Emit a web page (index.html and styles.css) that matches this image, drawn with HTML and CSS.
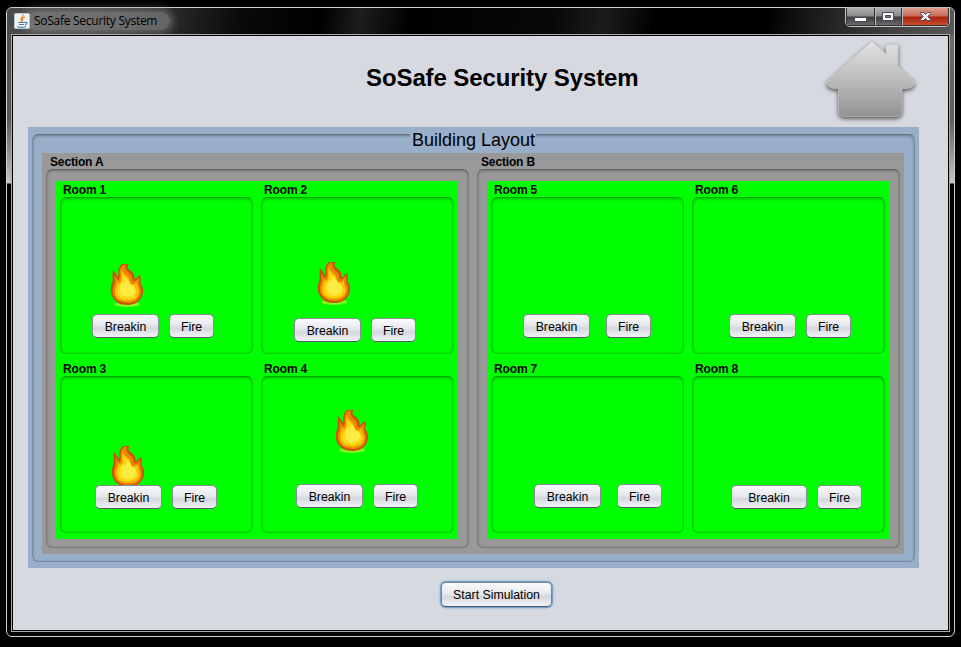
FILE: index.html
```html
<!DOCTYPE html>
<html lang="en">
<head>
<meta charset="utf-8">
<title>SoSafe Security System</title>
<link rel="stylesheet" href="styles.css">
</head>
<body>
<svg class="defs" width="0" height="0">
  <defs>
    <linearGradient id="house" x1="0" y1="0" x2="0" y2="1"><stop offset="0" stop-color="#e2e2e2"/><stop offset=".5" stop-color="#bdbdbd"/><stop offset="1" stop-color="#929292"/></linearGradient>
    <symbol id="flame" viewBox="0 0 36 44">
      <ellipse cx="18" cy="41" rx="13" ry="3" fill="#7dff20"/>
      <path fill="#c85400" d="M13 1H20C17 4 19 6 22 8C25 10 26 13 25.500 16C28 16 29 12 31.500 12.500C32 17 31 19 32 21C35 26 34.500 31 32 35C29 40 24 42 18 42C11 42 6 39 3.500 34C1 29 1.500 24 3.500 19C4 15 3 11 4 7C6 10 8 11 8.500 14C10 13 9 10 9.500 7C10 4 11 3 13 1Z"/>
      <path fill="#ee8500" d="M14 2H17C15 6 19 9 21 11C24 13 23 17 24 18.500C27 18 28 16 30 15C30 19 30 21 31 24C33 28 32 32 30 35C27 39 23 40 18 40C12 40 7 37 5 33C3 28 4 24 5.500 20C6 16 5 13 6 12C7 15 8 16 9 17C12 15 10 11 11 8C11 5 12 4 14 2Z"/>
      <path fill="#ffc000" d="M13 5C13 10 17 12 19 14C21 16 20 19 22 21C25 22 27 20 28 19C27 22 30 25 30 29C30 34 26 38 18 38C11 38 6 35 6 29C6 24 8 22 8 18L10 20C13 18 12 14 12 11Z"/>
      <path fill="#ffdb20" d="M14 11C15 15 19 15 20 18L22 22C25 24 28 26 27.500 30C27 34 23 36 18 36C12 36 8 33 8.500 28C8.500 25 10 23 11 21C14 19 14 15 14 11Z"/>
      <path fill="#faec40" d="M18 14.500C18 18 21 19 22 22C26 22 26 26 26 28C25 32 22 33.500 18 33.500C14 33.500 10.500 31 11 27C11 24 12 21 13 19C14 20 14 21 15 21C16 20 17 18 18 14.500Z"/>
    </symbol>
  </defs>
</svg>
<div class="window">
  <header class="titlebar">
    <svg class="java" viewBox="0 0 16 16"><rect x=".5" y=".5" width="15" height="15" rx="1" fill="#eef2f5" stroke="#b7c9d5"/><path d="M9 1.500C10 4 6 5 7 7L8 9M11 4C8 5 8 6 9 8" fill="none" stroke="#ee8420" stroke-width="1.200"/><path d="M4 9.500H11M5 11.500H10M3 13.500C6 14.500 10 14.500 12 13.500M11 9.500C14 9 13 11 11 12" fill="none" stroke="#4f7fa0" stroke-width="1.100"/></svg>
    <span class="caption">SoSafe Security System</span>
    <div class="controls">
      <span class="ctl min"><svg viewBox="0 0 28 18"><rect x="8.500" y="9.500" width="12" height="4" fill="#fff" stroke="#454b58"/></svg></span>
      <span class="ctl max"><svg viewBox="0 0 26 18"><path d="M7.500 4.500h11v8h-11z" fill="#fff" stroke="#454b58"/><path d="M10.500 7.500h5v2h-5z" fill="#777b84" stroke="#454b58"/></svg></span>
      <span class="ctl close"><svg viewBox="0 0 46 18"><path d="M18.500 4.500h3l2 2 2-2h3v1l-2.700 3 2.700 3v1h-3l-2-2-2 2h-3v-1l2.700-3-2.700-3z" fill="#fff" stroke="#504a55"/></svg></span>
    </div>
  </header>
  <main class="client">
    <div class="banner">
      <h1>SoSafe Security System</h1>
      <svg class="house" viewBox="0 0 94 82"><path fill="url(#house)" stroke="#c9c9c9" stroke-width=".6" d="M45.500 1.500Q47 0 48.500 1.500L61 13V3.500H73V25L89 40C91 43 87 47.500 82 47.500H77V70Q76 75 71 75.500H19Q14 75 13.500 70V47.500H9C4 47 0 43 2 40Z"/></svg>
    </div>
    <section class="building">
      <div class="frame building-frame">
        <h2>Building Layout</h2>
      <div class="sections">
        <section class="section">
          <h3>Section A</h3>
          <div class="frame section-frame"><div class="rooms">
            <article class="room r1"><h4>Room 1</h4><div class="frame room-frame"><svg class="flame"><use href="#flame"/></svg><div class="actions"><button>Breakin</button><button class="fire">Fire</button></div></div></article>
            <article class="room r2"><h4>Room 2</h4><div class="frame room-frame"><svg class="flame"><use href="#flame"/></svg><div class="actions"><button>Breakin</button><button class="fire">Fire</button></div></div></article>
            <article class="room r3"><h4>Room 3</h4><div class="frame room-frame"><svg class="flame"><use href="#flame"/></svg><div class="actions"><button>Breakin</button><button class="fire">Fire</button></div></div></article>
            <article class="room r4"><h4>Room 4</h4><div class="frame room-frame"><svg class="flame"><use href="#flame"/></svg><div class="actions"><button>Breakin</button><button class="fire">Fire</button></div></div></article>
          </div></div>
        </section>
        <section class="section">
          <h3>Section B</h3>
          <div class="frame section-frame"><div class="rooms">
            <article class="room r5"><h4>Room 5</h4><div class="frame room-frame"><div class="actions"><button>Breakin</button><button class="fire">Fire</button></div></div></article>
            <article class="room r6"><h4>Room 6</h4><div class="frame room-frame"><div class="actions"><button>Breakin</button><button class="fire">Fire</button></div></div></article>
            <article class="room r7"><h4>Room 7</h4><div class="frame room-frame"><div class="actions"><button>Breakin</button><button class="fire">Fire</button></div></div></article>
            <article class="room r8"><h4>Room 8</h4><div class="frame room-frame"><div class="actions"><button class="wide">Breakin</button><button class="fire">Fire</button></div></div></article>
          </div></div>
        </section>
      </div>
      </div>
    </section>
    <button class="start">Start Simulation</button>
  </main>
</div>
</body>
</html>
```

FILE: styles.css
```css
* { box-sizing: border-box; }
body { margin: 0; height: 647px; overflow: hidden; background: #000; padding: 7px 6px 0; font-family: "Liberation Sans", Arial, sans-serif; font-size: 12px; color: #000; }
.defs { display: block; height: 0; }
h1, h2, h3, h4 { margin: 0; }
.window {
  width: 949px; height: 630px; padding: 0 4px 4px; border: 1px solid #d0d0d0; border-radius: 6px;
  background:
    linear-gradient(#505050, #5a5654 110px, #c8c4c2 175px, #000 176px) left / 5px 100% no-repeat,
    linear-gradient(#707070, #5f5b59 110px, #c8c4c2 175px, #000 176px) right / 5px 100% no-repeat,
    #050505;
}
.titlebar {
  display: flex; align-items: flex-start; height: 27px; margin: 0 -4px -1px; padding-left: 7px; border-radius: 5px 5px 0 0;
  background: linear-gradient(100deg, #4a4a4a 0, #454545 90px, #262626 170px, #0a0a0a 230px, #000 310px, #1d1d1d 350px, #000 400px, #080808 540px, #1c1c1c 590px, #000 640px, #000 750px, #1d1d1d 800px, #444 880px, #5c5c5c 949px);
}
.java { width: 16px; height: 16px; margin-top: 5px; position: relative; z-index: 1; }
.caption {
  margin: 4px 0 0 -4px; padding: 0 8px; width: 144px; height: 18px; font: 12px/18px "Open Sans", sans-serif; letter-spacing: -.27px; white-space: nowrap;
  border-radius: 9px; background: rgba(140,140,140,.6); box-shadow: 0 0 8px 3px rgba(140,140,140,.6);
}
.controls { display: flex; margin: -1px 4px 0 auto; width: 105px; height: 20px; border: 1px solid #c2c2c2; border-radius: 0 0 5px 5px; overflow: hidden; }
.ctl { height: 18px; background: linear-gradient(#b0b0b0, #8a8a8a 48%, #3d3d3d 52%, #696969); border: 1px solid #333; border-top: 0; }
.ctl svg { display: block; height: 18px; margin: 0 -1px; }
.min { width: 29px; }
.max { width: 27px; border-left-color: #bbb; }
.close { width: 47px; border-left-color: #bbb; background: linear-gradient(#dd9c8d, #c96b58 48%, #a82410 52%, #c84b2c); }
.min svg { width: 28px; } .max svg { width: 26px; } .close svg { width: 46px; }
.client { position: relative; display: flex; flex-direction: column; width: 939px; height: 598px; border: 1px solid #aaa; background: #d6d9e0; padding-left: 16px; box-shadow: inset 0 0 0 1px #000; }
.banner { display: flex; height: 92px; }
h1 { width: 273px; margin: 29px 0 0 338px; font-size: 24px; line-height: 28px; letter-spacing: -.1px; white-space: nowrap; }
.house { width: 94px; height: 82px; margin: 6px 0 0 186px; filter: drop-shadow(0 2px 2px #555); }
.building { width: 891px; height: 441px; padding: 7px 4px 6px; background: #99aec8; }
.frame { border: 1px solid rgba(0,0,0,.2); border-top-color: rgba(0,0,0,.34); border-radius: 6px; box-shadow: inset 0 1px 3px rgba(0,0,0,.28); }
.building-frame { width: 883px; height: 428px; padding-left: 9px; }
h2 { width: 126px; height: 18px; margin: -4px 0 0 368px; padding-left: 2px; position: relative; background: #99aec8; font-size: 18px; font-weight: 400; line-height: 18px; white-space: nowrap; }
.sections { display: flex; margin-top: 4px; width: 862px; height: 401px; background: #999; }
.section { width: 431px; padding: 0 4px; }
h3, h4 { height: 16px; padding-left: 4px; font-size: 12px; line-height: 18px; letter-spacing: -.15px; }
.section-frame { height: 379px; padding: 11px 0 0 9px; }
.rooms { display: grid; grid-template-columns: 201px 201px; grid-template-rows: 179px 179px; width: 402px; height: 358px; background: #0f0; }
.room { padding: 0 4px; }
h4 { padding-left: 3px; }
.room-frame { display: flex; flex-direction: column; height: 157px; }
.flame { flex: none; width: 36px; height: 44px; }
.actions { position: relative; display: flex; gap: 10px; margin-top: auto; }
button {
  width: 67px; height: 24px; padding: 2px 0 0; border: 1px solid #888d94; border-bottom-color: #555b66; border-radius: 5px;
  background: linear-gradient(#fafbfc, #e6e8ec 45%, #d4d7de 60%, #f1f3f8); color: #000; font: 12.3px/20px "Liberation Sans", Arial, sans-serif; white-space: nowrap;
}
.fire { width: 45px; }
.wide { width: 76px; }
.r1 .flame { margin: 65px 0 0 48px; }
.r2 .flame { margin: 63px 0 0 54px; }
.r3 .flame { margin: 68px 0 -4px 49px; }
.r4 .flame { margin: 32px 0 0 72px; }
.r1 .actions { margin-left: 31px; margin-bottom: 15px; }
.r2 .actions { margin-left: 32px; margin-bottom: 11px; }
.r3 .actions { margin-left: 34px; margin-bottom: 23px; }
.r4 .actions { margin-left: 34px; margin-bottom: 24px; }
.r5 .actions { margin-left: 31px; margin-bottom: 15px; gap: 16px; }
.r6 .actions { margin-left: 36px; margin-bottom: 15px; }
.r7 .actions { margin-left: 42px; margin-bottom: 24px; gap: 16px; }
.r8 .actions { margin-left: 38px; margin-bottom: 23px; }
.start { width: 111px; height: 25px; padding-top: 1px; margin: 14px 0 0 413px; border-color: #7d838b; border-bottom-color: #4b5663; box-shadow: 0 0 0 1px #73a4d1, 0 0 2px 1px #73a4d1; }
```
